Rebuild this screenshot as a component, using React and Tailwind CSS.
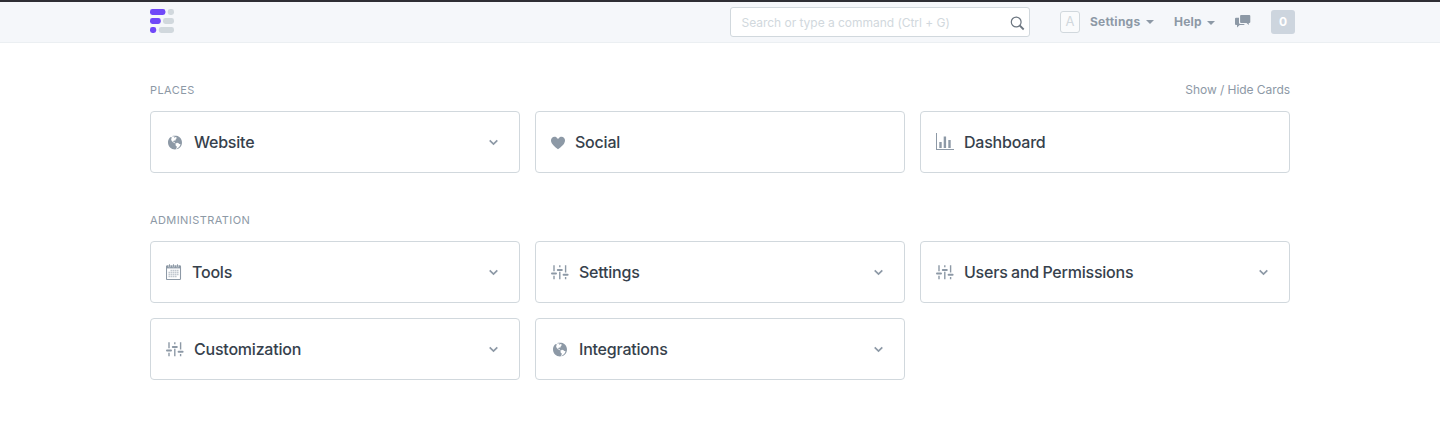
import React from "react";

function Globe() {
  return (
    <svg className="ml-0.5 h-4 w-3.5" viewBox="0 -0.4 14 16" fill="currentColor">
      <path d="M7 1C3.14 1 0 4.14 0 8s3.14 7 7 7c.48 0 .94-.05 1.38-.14-.17-.08-.2-.73-.02-1.09.19-.41.81-1.45.2-1.8-.61-.35-.44-.5-.81-.91-.37-.41-.22-.47-.25-.58-.08-.34.36-.89.39-.94.02-.06.02-.27 0-.33 0-.08-.27-.22-.34-.23-.06 0-.11.11-.2.13-.09.02-.5-.25-.59-.33-.09-.08-.14-.23-.27-.34-.13-.13-.14-.03-.33-.11s-.8-.31-1.28-.48c-.48-.19-.52-.47-.52-.66-.02-.2-.3-.47-.42-.67-.14-.2-.16-.47-.2-.41-.04.06.25.78.2.81-.05.02-.16-.2-.3-.38-.14-.19.14-.09-.3-.95s.14-1.3.17-1.75c.03-.45.38.17.19-.13-.19-.3 0-.89-.14-1.11-.13-.22-.88.25-.88.25.02-.22.69-.58 1.16-.92.47-.34.78-.06 1.16.05.39.13.41.09.28-.05-.13-.13.06-.17.36-.13.28.05.38.41.83.36.47-.03.05.09.11.22s-.06.11-.38.3c-.3.2.02.22.55.61s.38-.25.31-.55c-.07-.3.39-.06.39-.06.33.22.27.02.5.08.23.06.91.64.91.64-.83.44-.31.48-.17.59.14.11-.28.3-.28.3-.17-.17-.19.02-.3.08-.11.06-.02.22-.02.22-.56.09-.44.69-.42.83 0 .14-.38.36-.47.58-.09.2.25.64.06.66-.19.03-.34-.66-1.31-.41-.3.08-.94.41-.59 1.08.36.69.92-.19 1.11-.09.19.1-.06.53-.02.55.04.02.53.02.56.61.03.59.77.53.92.55.17 0 .7-.44.77-.45.06-.03.38-.28 1.03.09.66.36.98.31 1.2.47.22.16.08.47.28.58.2.11 1.06-.03 1.28.31.22.34-.88 2.09-1.22 2.28-.34.19-.48.64-.84.92s-.81.64-1.27.91c-.41.23-.47.66-.66.8 3.14-.7 5.48-3.5 5.48-6.84 0-3.86-3.14-7-7-7z" />
    </svg>
  );
}

function Heart() {
  return (
    <svg className="h-4 w-3.5" viewBox="0 -0.4 12 14" preserveAspectRatio="none" fill="currentColor">
      <path d="M11.2 3c-.52-.63-1.25-.95-2.2-1-.97 0-1.69.42-2.2 1-.51.58-.78.92-.8 1-.02-.08-.28-.42-.8-1-.52-.58-1.17-1-2.2-1-.95.05-1.69.38-2.2 1-.52.61-.78 1.28-.8 2 0 .52.09 1.52.67 2.67C1.25 8.82 3.01 10.61 6 13c2.98-2.39 4.77-4.17 5.34-5.33C11.91 6.51 12 5.5 12 5c-.02-.72-.28-1.39-.8-2z" />
    </svg>
  );
}

function Chart() {
  return (
    <svg className="h-[18px] w-[18px]" viewBox="0 0 18 18" fill="currentColor">
      <path d="M0 0h1v16h17v1H0zM3.3 9h2.4v6H3.3zM7.7 3.5h2.4V15H7.7zM12.3 7h2.4v8h-2.4z" />
    </svg>
  );
}

function Calendar() {
  return (
    <svg className="h-4 w-4" viewBox="0 0 16 16" fill="none" stroke="currentColor">
      <rect x="0.5" y="1.800" width="14" height="13.700" rx="0.8" strokeWidth="1.100" />
      <path d="M1 3.200h13" strokeWidth="2.400" />
      <path d="M3.500 0v3.200M7.500 0v3.200M11.500 0v3.200" stroke="#fff" strokeWidth="2" opacity="0.8" />
      <path d="M3.500 0.300v2.600M7.500 0.300v2.600M11.500 0.300v2.600" strokeWidth="1" />
      <path d="M4.500 6.500h8.500M2.500 8.500h10.500M2.500 10.500h10.500M2.500 12.500h8.500" strokeWidth="1.400" strokeDasharray="1.400 0.600" opacity="0.6" />
    </svg>
  );
}

function Sliders() {
  return (
    <svg className="h-4 w-[18px]" viewBox="0 -0.3 18 16" fill="none" stroke="currentColor">
      <path d="M3 1v6M3 11.500v3.500M8.800 1v2M8.800 7.500V15M14.600 1v7.300M14.600 12.800V15" strokeWidth="1.400" />
      <path d="M1 9.300h4M6.800 5.600h4M12.600 10.400h4" strokeWidth="2" strokeLinecap="round" />
    </svg>
  );
}

function Caret() {
  return (
    <svg className="h-1 w-2" viewBox="0 0 8 4" fill="currentColor">
      <path d="M0 0h8L4 4z" />
    </svg>
  );
}

function Logo() {
  return (
    <svg className="h-6 w-6" viewBox="0 0 24 24">
      <g fill="#7048f8">
        <rect width="15.400" height="6" rx="2.400" />
        <rect y="9" width="10.800" height="6" rx="2.400" />
        <rect y="18" width="6.200" height="6" rx="2.400" />
      </g>
      <g fill="#d1d8dd">
        <rect x="17.800" width="6.200" height="6" rx="2.400" />
        <rect x="13" y="9" width="11" height="6" rx="2.400" />
        <rect x="8.800" y="18" width="15.200" height="6" rx="2.400" />
      </g>
    </svg>
  );
}

function Card({ icon, label, gap = "gap-2.5", more = true }) {
  return (
    <div className="flex h-[62px] items-center justify-between rounded-[4px] border border-[#d1d8dd] pl-[15px] pr-5">
      <div className={"flex items-center text-[#8d99a6] " + gap}>
        {icon}
        <span className="text-base font-medium tracking-[-0.22px] text-[#36414c] [word-spacing:-0.6px]">{label}</span>
      </div>
      {more && (
        <svg className="h-2 w-2.5 text-[#8d99a6]" viewBox="0 0 10 8" fill="none" stroke="currentColor" strokeWidth="1.700">
          <path d="M0.700 2.300l3.800 3.700L8.300 2.300" />
        </svg>
      )}
    </div>
  );
}

function Heading({ children }) {
  return <h2 className="text-[11px] leading-4 tracking-[0.42px] text-[#8d99a6] uppercase">{children}</h2>;
}

export default function App() {
  return (
    <div className="h-[440px] overflow-hidden bg-white font-['Inter',sans-serif] text-xs text-[#8d99a6]">
      <header className="h-[43px] border-t-2 border-b border-t-[#2e2e34] border-b-[#ebeff2] bg-[#f5f7fa]">
        <div className="ml-[150px] flex w-[1145px] items-start">
          <div className="mt-[7px]">
            <Logo />
          </div>
          <div className="mt-[5px] ml-[556px] flex h-[30px] w-[300px] shrink-0 items-center justify-between rounded-[3px] border border-[#d1d8dd] bg-white pr-1 pl-[10.5px]">
            <span className="mt-px text-xs tracking-[-0.03px] text-[#d1d8dd]">Search or type a command (Ctrl + G)</span>
            <svg className="mt-0.5 h-[15px] w-[15px] text-[#6c7680]" viewBox="0 0 15 15" fill="none" stroke="currentColor">
              <circle cx="6.200" cy="6" r="4.900" strokeWidth="1.200" />
              <path d="M9.700 9.500l4 4" strokeWidth="1.800" />
            </svg>
          </div>
          <div className="mt-[9px] ml-[30px] flex h-[22px] w-5 shrink-0 items-center justify-center rounded-[3px] border border-[#d1d8dd] bg-[#fafbfc] text-[13px] text-[#d1d8dd]">
            A
          </div>
          <div className="mt-3 ml-2.5 flex w-16 shrink-0 items-center justify-between leading-4 font-bold tracking-[0.25px]">
            Settings <Caret />
          </div>
          <div className="mt-3 ml-5 flex w-[41px] shrink-0 items-center justify-between leading-4 font-bold tracking-[0.2px]">
            Help
            <span className="mt-0.5 flex">
              <Caret />
            </span>
          </div>
          <svg className="mt-[13px] ml-5 h-[13px] w-4 shrink-0" viewBox="0 0 16 13" fill="currentColor">
            <path d="M6 0h8.300q1 0 1 1v6q0 1-1 1h-.5v2l-2.300-2H6q-.9 0-.9-1V1q0-1 .9-1z" />
            <path d="M1 2.800h3V7.700q0 1.300 1.300 1.300H9.500v.2q0 .8-1 .8H4.700L2 12.600V10H1q-1 0-1-1V3.800q0-1 1-1z" />
          </svg>
          <div className="mt-2 ml-5 flex h-6 w-6 shrink-0 items-center justify-center rounded-[3px] bg-[#cdd5de] font-bold text-white">
            0
          </div>
        </div>
      </header>
      <main className="mx-auto w-[1140px] pt-[39px]">
        <div className="flex items-center justify-between">
          <Heading>Places</Heading>
          <span className="leading-4 tracking-[-0.06px]">Show / Hide Cards</span>
        </div>
        <section className="mt-[13px] grid grid-cols-3 gap-[15px]">
          <Card icon={<Globe />} label="Website" gap="gap-3" />
          <Card icon={<Heart />} label="Social" more={false} />
          <Card icon={<Chart />} label="Dashboard" more={false} />
        </section>
        <div className="mt-[39px] flex">
          <Heading>Administration</Heading>
        </div>
        <section className="mt-[13px] grid grid-cols-3 gap-[15px]">
          <Card icon={<Calendar />} label="Tools" />
          <Card icon={<Sliders />} label="Settings" />
          <Card icon={<Sliders />} label="Users and Permissions" />
          <Card icon={<Sliders />} label="Customization" />
          <Card icon={<Globe />} label="Integrations" gap="gap-3" />
        </section>
      </main>
    </div>
  );
}
